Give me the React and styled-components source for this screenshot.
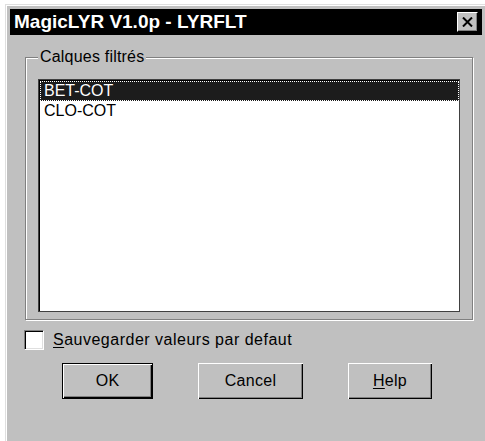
import React from "react";
import styled, { createGlobalStyle } from "styled-components";

const Global = createGlobalStyle`
  html, body {
    margin: 0;
    padding: 0;
    background: #ffffff;
    overflow: hidden;
  }
  body {
    font-family: "Liberation Sans", Arial, sans-serif;
    font-size: 16px;
    color: #000;
  }
`;

const Window = styled.div`
  box-sizing: border-box;
  margin: 4px 0 0 5px;
  width: 482px;
  height: 460px;
  background: #c0c0c0;
  border-top: 1px solid #dfdfdf;
  border-left: 1px solid #dfdfdf;
  box-shadow: inset 1px 1px #ffffff;
  padding: 4px 0 0 4px;
  display: flex;
  flex-direction: column;
`;

const TitleBar = styled.div`
  height: 26px;
  background: #000000;
  display: flex;
  align-items: center;
  justify-content: space-between;
  padding: 0 4px 0 4px;
  width: 472px;
  box-sizing: border-box;
`;

const Title = styled.span`
  color: #ffffff;
  font-weight: bold;
  font-size: 19px;
  line-height: 22px;
`;

const CloseButton = styled.div`
  box-sizing: border-box;
  width: 21px;
  height: 20px;
  background: #c0c0c0;
  border-top: 1px solid #ffffff;
  border-left: 1px solid #ffffff;
  border-right: 1px solid #000000;
  border-bottom: 1px solid #000000;
  box-shadow: inset -1px -1px #808080;
  display: flex;
  align-items: center;
  justify-content: center;
`;

const Body = styled.div`
  padding: 13px 0 0 15px;
  display: flex;
  flex-direction: column;
`;

const Group = styled.fieldset`
  box-sizing: border-box;
  width: 448px;
  margin: 0;
  padding: 0 12px 7px 12px;
  border: 1px solid #808080;
  box-shadow: inset 1px 1px #ffffff, 1px 1px #ffffff;
`;

const Legend = styled.legend`
  padding: 0 2px;
  margin-left: 0;
  font-size: 16px;
  line-height: 18px;
  letter-spacing: 0.2px;
  background: #c0c0c0;
`;

const ListBox = styled.div`
  box-sizing: border-box;
  margin-top: 13px;
  height: 233px;
  background: #ffffff;
  border: 1px solid #404040;
  box-shadow: inset 1px 1px #000000;
  padding: 1px 0 0 1px;
`;

const ListItem = styled.div`
  box-sizing: border-box;
  height: 20px;
  line-height: 19px;
  padding: 0 4px;
  font-size: 16px;
  color: ${(p) => (p.$selected ? "#ffffff" : "#000000")};
  background: ${(p) => (p.$selected ? "#1c1c1c" : "transparent")};
  outline: ${(p) => (p.$selected ? "1px dotted #ffffff" : "none")};
  outline-offset: -1px;
`;

const CheckRow = styled.label`
  display: flex;
  align-items: center;
  gap: 9px;
  margin-top: 10px;
  margin-left: -1px;
  font-size: 16px;
  letter-spacing: 0.5px;
`;

const CheckBox = styled.span`
  box-sizing: border-box;
  width: 20px;
  height: 20px;
  background: #ffffff;
  border-top: 1px solid #808080;
  border-left: 1px solid #808080;
  border-right: 1px solid #ffffff;
  border-bottom: 1px solid #ffffff;
  box-shadow: inset 1px 1px #000000, inset -1px -1px #dfdfdf;
`;

const Underlined = styled.span`
  text-decoration: underline;
  text-underline-offset: 2px;
`;

const ButtonRow = styled.div`
  display: flex;
  gap: 45px;
  margin-top: 13px;
  margin-left: 37px;
`;

const Button = styled.div`
  box-sizing: border-box;
  width: ${(p) => p.$w}px;
  height: 36px;
  background: #c0c0c0;
  display: flex;
  align-items: center;
  justify-content: center;
  font-size: 16px;
  letter-spacing: 0.3px;
  border: ${(p) => (p.$default ? "1px solid #000000" : "none")};
  box-shadow: inset 1px 1px #ffffff, inset -1px -1px #000000,
    inset -2px -2px #808080;
`;

export default function App() {
  return (
    <>
      <Global />
      <Window>
        <TitleBar>
          <Title>MagicLYR V1.0p - LYRFLT</Title>
          <CloseButton>
            <svg width="11" height="10" viewBox="0 0 11 10">
              <path d="M1 0.5 L10 9.5 M10 0.5 L1 9.5" stroke="#000" strokeWidth="2" />
            </svg>
          </CloseButton>
        </TitleBar>
        <Body>
          <Group>
            <Legend>Calques filtrés</Legend>
            <ListBox>
              <ListItem $selected>BET-COT</ListItem>
              <ListItem>CLO-COT</ListItem>
            </ListBox>
          </Group>
          <CheckRow>
            <CheckBox />
            <span>
              <Underlined>S</Underlined>auvegarder valeurs par defaut
            </span>
          </CheckRow>
          <ButtonRow>
            <Button $w={91} $default>OK</Button>
            <Button $w={105}>Cancel</Button>
            <Button $w={84}>
              <span>
                <Underlined>H</Underlined>elp
              </span>
            </Button>
          </ButtonRow>
        </Body>
      </Window>
    </>
  );
}
